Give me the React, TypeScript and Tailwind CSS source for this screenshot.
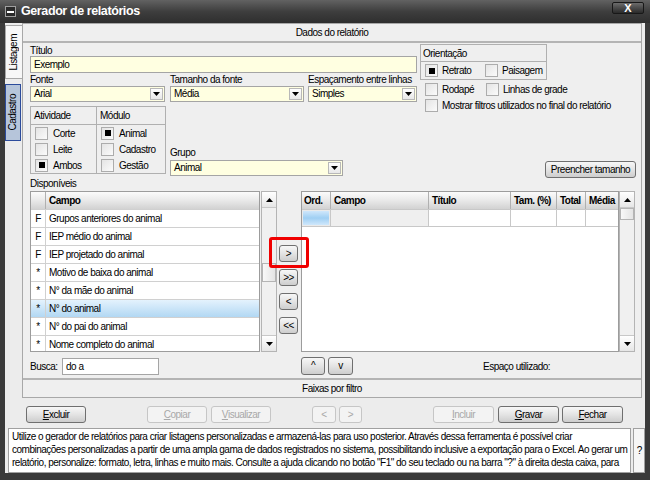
import type { ReactNode } from 'react'

const FONT = "font-['Liberation_Sans',Arial,sans-serif]"

function Tri({ up }: { up?: boolean }) {
  return (
    <svg width="7" height="4" viewBox="0 0 7 4" className="block">
      <path d={up ? 'M0 4h7L3.5 0z' : 'M0 0h7L3.5 4z'} fill="#000" />
    </svg>
  )
}

function Check({ on }: { on?: boolean }) {
  return (
    <span className="flex h-[13px] w-[13px] shrink-0 items-center justify-center border border-[#acacac] bg-linear-to-br from-[#e4e4e4] to-[#fbfbfb]">
      {on && <span className="h-[6px] w-[6px] bg-black" />}
    </span>
  )
}

function Select({ value, className }: { value: string; className: string }) {
  return (
    <div className={`flex h-[16px] items-center border border-[#a5a5a5] bg-[#ffffe1] ${className}`}>
      <span className="flex-1 truncate pl-[3px] leading-[14px]">{value}</span>
      <span className="mr-[1px] flex h-[12px] w-[13px] items-center justify-center border border-[#b8b8b8] bg-linear-to-b from-white to-[#e8e8e8]">
        <Tri />
      </span>
    </div>
  )
}

function Btn({
  children,
  className = '',
  disabled,
}: {
  children: ReactNode
  className?: string
  disabled?: boolean
}) {
  return (
    <div
      className={`flex h-[17px] items-center justify-center whitespace-nowrap rounded-[3px] border leading-none ${
        disabled
          ? 'border-[#c6c6c6] bg-[#f3f3f3] text-[#a8a8a8]'
          : 'border-[#6f6f6f] bg-linear-to-b from-[#f7f7f7] via-[#e4e4e4] to-[#cdcdcd]'
      } ${className}`}
    >
      {children}
    </div>
  )
}

function ScrollBar({ thumbTop, thumbH }: { thumbTop: string; thumbH: string }) {
  return (
    <div className="flex h-full w-[16px] flex-col border border-[#b4b4b4] bg-[#f0f0f0]">
      <div className="flex h-[16px] items-center justify-center border-b border-[#c8c8c8] bg-linear-to-b from-white to-[#e6e6e6]">
        <Tri up />
      </div>
      <div className="flex-1">
        <div className={`mx-auto w-[14px] border border-[#b4b4b4] bg-linear-to-r from-[#f8f8f8] to-[#e4e4e4] ${thumbTop} ${thumbH}`} />
      </div>
      <div className="flex h-[16px] items-center justify-center border-t border-[#c8c8c8] bg-linear-to-b from-white to-[#e6e6e6]">
        <Tri />
      </div>
    </div>
  )
}

const fields: [string, string][] = [
  ['F', 'Grupos anteriores do animal'],
  ['F', 'IEP médio do animal'],
  ['F', 'IEP projetado do animal'],
  ['*', 'Motivo de baixa do animal'],
  ['*', 'N° da mãe do animal'],
  ['*', 'N° do animal'],
  ['*', 'N° do pai do animal'],
  ['*', 'Nome completo do animal'],
]

const HEAD = 'bg-linear-to-b from-[#fbfbfb] via-[#e9e9e9] to-[#d2d2d2] font-bold'

export default function App() {
  return (
    <div
      className={`${FONT} flex h-[480px] w-[650px] flex-col overflow-hidden whitespace-nowrap bg-[#3a3a3a] text-[10px] tracking-[-0.5px] text-black`}
    >
      {/* title bar */}
      <div className="flex h-[23px] shrink-0 items-start bg-linear-to-b from-[#626262] via-[#3e3e3e] to-[#2e2e2e]">
        <span className="ml-[5px] mt-[6px] flex h-[11px] w-[11px] items-center justify-center border border-[#a0a0a0] bg-[#2a2a2a]">
          <span className="h-[2px] w-[7px] bg-white" />
        </span>
        <span className="ml-[5px] mt-[4px] text-[12.5px] font-bold leading-[15px] tracking-[-0.4px] text-white">
          Gerador de relatórios
        </span>
        <span className="ml-auto mr-[6px] mt-[2px] flex h-[12px] w-[32px] items-center justify-center rounded-[2px] border border-[#181818] bg-linear-to-b from-[#6c6c6c] to-[#2a2a2a] text-[11px] font-bold leading-none tracking-normal text-white">
          X
        </span>
      </div>

      {/* body */}
      <div className="mx-[5px] mb-[7px] flex flex-1 flex-col bg-[#ececec]">
        <div className="flex h-[375px]">
          {/* vertical tabs */}
          <div className="flex w-[18px] flex-col items-end">
            <div className="mt-[2px] flex h-[54px] w-[17px] items-center justify-center border border-r-0 border-[#a8a8a8] bg-[#f7f7f7]">
              <span className="rotate-180 leading-none [writing-mode:vertical-rl]">Listagem</span>
            </div>
            <div className="mr-[1px] mt-[5px] flex h-[57px] w-[16px] items-center justify-center border border-[#2c4c9c] bg-[#b6c5da]">
              <span className="rotate-180 leading-none [writing-mode:vertical-rl]">Cadastro</span>
            </div>
          </div>

          {/* main panel */}
          <div className="mr-[4px] flex flex-1 flex-col border border-[#a8a8a8] bg-[#efefef]">
            <div className="flex h-[19px] items-center justify-center border-b-2 border-[#b4b4b4]">Dados do relatório</div>

            <div className="flex flex-1 flex-col pl-[7px] pr-[5px]">
              {/* top form */}
              <div className="mt-[1px] flex">
                <div className="flex w-[387px] flex-col pb-[2px]">
                  <div className="h-[12px] leading-[13px]">Título</div>
                  <div className="flex h-[17px] items-center border border-[#a5a5a5] bg-[#ffffe1] pl-[3px]">Exemplo</div>
                  <div className="flex h-[13px] items-end leading-[12px]">
                    <span className="w-[140px]">Fonte</span>
                    <span className="w-[138px]">Tamanho da fonte</span>
                    <span>Espaçamento entre linhas</span>
                  </div>
                  <div className="flex">
                    <Select value="Arial" className="w-[135px]" />
                    <Select value="Média" className="ml-[5px] w-[134px]" />
                    <Select value="Simples" className="ml-[4px] w-[109px]" />
                  </div>
                  <div className="mt-[4px] flex">
                    <div className="flex h-[68px] w-[136px] border border-[#b0b0b0]">
                      <div className="flex w-[66px] flex-col border-r border-[#b0b0b0]">
                        <div className="flex h-[18px] items-center border-b border-[#b0b0b0] pl-[3px]">Atividade</div>
                        {[
                          ['Corte', false],
                          ['Leite', false],
                          ['Ambos', true],
                        ].map(([l, on]) => (
                          <div key={l as string} className="flex h-[16px] items-center pl-[4px]">
                            <Check on={on as boolean} />
                            <span className="ml-[5px]">{l}</span>
                          </div>
                        ))}
                      </div>
                      <div className="flex flex-1 flex-col">
                        <div className="flex h-[18px] items-center border-b border-[#b0b0b0] pl-[3px]">Módulo</div>
                        {[
                          ['Animal', true],
                          ['Cadastro', false],
                          ['Gestão', false],
                        ].map(([l, on]) => (
                          <div key={l as string} className="flex h-[16px] items-center pl-[4px]">
                            <Check on={on as boolean} />
                            <span className="ml-[5px]">{l}</span>
                          </div>
                        ))}
                      </div>
                    </div>
                    <div className="ml-[4px] flex h-[70px] flex-col justify-end">
                      <div className="h-[13px] leading-[12px]">Grupo</div>
                      <Select value="Animal" className="w-[173px]" />
                    </div>
                  </div>
                </div>

                <div className="ml-[3px] flex flex-1 flex-col">
                  <div className="flex h-[36px] w-[127px] flex-col border border-[#b0b0b0]">
                    <div className="flex h-[17px] items-center border-b border-[#b0b0b0] pl-[2px]">Orientação</div>
                    <div className="flex flex-1 items-center pl-[4px]">
                      <Check on />
                      <span className="ml-[4px] w-[43px]">Retrato</span>
                      <Check />
                      <span className="ml-[4px]">Paisagem</span>
                    </div>
                  </div>
                  <div className="mt-[2px] flex h-[14px] items-center pl-[5px]">
                    <Check />
                    <span className="ml-[4px] w-[44px]">Rodapé</span>
                    <Check />
                    <span className="ml-[4px]">Linhas de grade</span>
                  </div>
                  <div className="mt-[2px] flex h-[14px] items-center pl-[5px]">
                    <Check />
                    <span className="ml-[4px]">Mostrar filtros utilizados no final do relatório</span>
                  </div>
                  <Btn className="mt-auto w-[91px] self-end">Preencher tamanho</Btn>
                </div>
              </div>

              <div className="h-[13px] leading-[11px]">Disponíveis</div>

              {/* lists */}
              <div className="flex h-[161px]">
                <div className="flex w-[230px] flex-col overflow-hidden border border-[#9c9c9c] bg-white">
                  <div className={`flex h-[17px] shrink-0 ${HEAD}`}>
                    <span className="w-[15px] border-r border-[#b0b0b0]" />
                    <span className="flex flex-1 items-center pl-[3px]">Campo</span>
                  </div>
                  {fields.map(([k, name], i) => {
                    const sel = i === 5
                    return (
                      <div
                        key={name}
                        className={`flex h-[18px] shrink-0 border-t border-[#d0d0d0] ${
                          sel ? 'bg-linear-to-b from-[#e4f2fd] to-[#b2d8f3]' : ''
                        }`}
                      >
                        <span className="flex w-[15px] items-center justify-center border-r border-[#d0d0d0]">{k}</span>
                        <span className="flex flex-1 items-center pl-[3px]">{name}</span>
                      </div>
                    )
                  })}
                </div>
                <div className="ml-[1px]">
                  <ScrollBar thumbTop="mt-[55px]" thumbH="h-[19px]" />
                </div>

                <div className="ml-[2px] flex w-[19px] flex-col gap-[7px] pt-[54px]">
                  <div className="relative">
                    <Btn className="w-[19px]">&gt;</Btn>
                    <span className="absolute -left-[10px] -top-[8px] h-[31px] w-[40px] rounded-[3px] border-[3px] border-[#f00000]" />
                  </div>
                  <Btn className="w-[19px]">&gt;&gt;</Btn>
                  <Btn className="w-[19px]">&lt;</Btn>
                  <Btn className="w-[19px]">&lt;&lt;</Btn>
                </div>

                <div className="ml-[3px] flex w-[318px] flex-col border border-[#9c9c9c] bg-white">
                  <div className={`flex h-[17px] ${HEAD}`}>
                    <span className="flex w-[29px] items-center border-r border-[#b0b0b0] pl-[2px]">Ord.</span>
                    <span className="flex w-[98px] items-center border-r border-[#b0b0b0] pl-[3px]">Campo</span>
                    <span className="flex w-[82px] items-center border-r border-[#b0b0b0] pl-[3px]">Título</span>
                    <span className="flex w-[46px] items-center border-r border-[#b0b0b0] pl-[3px]">Tam. (%)</span>
                    <span className="flex w-[29px] items-center border-r border-[#b0b0b0] pl-[3px]">Total</span>
                    <span className="flex flex-1 items-center pl-[3px]">Média</span>
                  </div>
                  <div className="flex h-[18px] border-b border-t border-[#c8c8c8]">
                    <span className="flex w-[29px] items-center border-r border-[#c8c8c8] bg-[#eaeaea] p-[1px]">
                      <span className="h-full w-full bg-linear-to-b from-[#cfe7fb] via-[#9fcff3] to-[#cfe7fb]" />
                    </span>
                    <span className="w-[98px] border-r border-[#c8c8c8] bg-[#efefef]" />
                    <span className="w-[82px] border-r border-[#c8c8c8]" />
                    <span className="w-[46px] border-r border-[#c8c8c8]" />
                    <span className="w-[29px] border-r border-[#c8c8c8]" />
                    <span className="flex-1" />
                  </div>
                </div>
                <div className="w-[17px]">
                  <ScrollBar thumbTop="mt-[0px]" thumbH="h-[12px]" />
                </div>
              </div>

              {/* search row */}
              <div className="mt-[5px] flex h-[18px] items-center">
                <div className="flex w-[271px] items-center">
                  <span className="w-[32px]">Busca:</span>
                  <span className="flex h-[17px] w-[97px] items-center border border-[#a5a5a5] bg-white pl-[3px]">do a</span>
                </div>
                <Btn className="h-[18px] w-[24px]">^</Btn>
                <Btn className="ml-[3px] h-[18px] w-[25px]">v</Btn>
                <span className="ml-[130px]">Espaço utilizado:</span>
              </div>
            </div>

            <div className="flex h-[19px] items-center justify-center border-t-2 border-[#b4b4b4]">Faixas por filtro</div>
          </div>
        </div>

        {/* button bar */}
        <div className="flex h-[30px] items-start pt-[8px]">
          <Btn className="ml-[21px] w-[60px]">
            <u>E</u>xcluir
          </Btn>
          <Btn disabled className="ml-[61px] w-[60px]">
            <u>C</u>opiar
          </Btn>
          <Btn disabled className="ml-[4px] w-[60px]">
            <u>V</u>isualizar
          </Btn>
          <Btn disabled className="ml-[41px] w-[24px]">
            &lt;
          </Btn>
          <Btn disabled className="ml-[3px] w-[23px]">
            &gt;
          </Btn>
          <Btn disabled className="ml-[71px] w-[61px]">
            <u>I</u>ncluir
          </Btn>
          <Btn className="ml-[4px] w-[61px]">
            <u>G</u>ravar
          </Btn>
          <Btn className="ml-[3px] w-[61px]">
            <u>F</u>echar
          </Btn>
        </div>

        {/* help */}
        <div className="flex h-[45px]">
          <div className="ml-[3px] flex-1 border border-[#a0a0a0] bg-white px-[3px] leading-[13px]">
            <div className="mt-[1px]">
              Utilize o gerador de relatórios para criar listagens personalizadas e armazená-las para uso posterior. Através dessa ferramenta é possível criar
            </div>
            <div>
              combinações personalizadas a partir de uma ampla gama de dados registrados no sistema, possibilitando inclusive a exportação para o Excel. Ao gerar um
            </div>
            <div>
              relatório, personalize: formato, letra, linhas e muito mais. Consulte a ajuda clicando no botão "F1" do seu teclado ou na barra "?" à direita desta caixa, para
            </div>
          </div>
          <div className="ml-[2px] flex w-[15px] items-center justify-center border border-[#a0a0a0] bg-[#f6f6f6]">?</div>
        </div>
      </div>
    </div>
  )
}
